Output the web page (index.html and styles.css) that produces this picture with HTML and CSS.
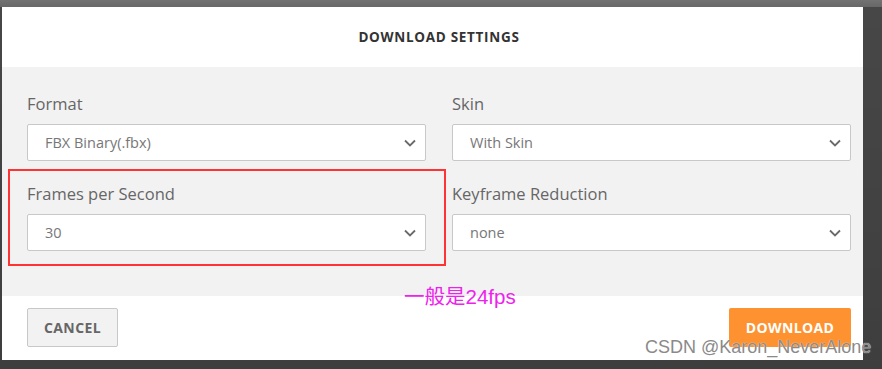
FILE: index.html
```html
<!DOCTYPE html>
<html lang="en">
<head>
    <meta charset="UTF-8">
    <title>Download Settings</title>
    <link rel="stylesheet" href="styles.css">
</head>
<body>
    <div class="dialog">
        <div class="dialog-header">
            <h2>Download Settings</h2>
        </div>

        <div class="dialog-body">
            <div class="field">
                <label>Format</label>
                <div class="select">
                    <span>FBX Binary(.fbx)</span>
                    <svg class="chevron" viewBox="0 0 12 8"><path d="M1 1.5 6 6.5 11 1.5"/></svg>
                </div>
            </div>
            <div class="field">
                <label>Skin</label>
                <div class="select">
                    <span>With Skin</span>
                    <svg class="chevron" viewBox="0 0 12 8"><path d="M1 1.5 6 6.5 11 1.5"/></svg>
                </div>
            </div>
            <div class="field">
                <label>Frames per Second</label>
                <div class="select">
                    <span>30</span>
                    <svg class="chevron" viewBox="0 0 12 8"><path d="M1 1.5 6 6.5 11 1.5"/></svg>
                </div>
            </div>
            <div class="field">
                <label>Keyframe Reduction</label>
                <div class="select">
                    <span>none</span>
                    <svg class="chevron" viewBox="0 0 12 8"><path d="M1 1.5 6 6.5 11 1.5"/></svg>
                </div>
            </div>
            <div class="highlight"></div>
        </div>

        <div class="dialog-footer">
            <button class="btn btn-cancel">Cancel</button>
            <button class="btn btn-download">Download</button>
        </div>

        <div class="note">一般是24fps</div>
    </div>
    <div class="watermark">CSDN @Karon_NeverAlone</div>
</body>
</html>
```

FILE: styles.css
```css
:root {
    --orange: #ff9230;
    --panel-gray: #f2f2f2;
    --text-gray: #666;
    --border-color: #c8c8c8;
}

body {
    margin: 0;
    height: 369px;
    overflow: hidden;
    position: relative;
    font-family: 'Open Sans', 'Noto Sans', sans-serif;
    background: linear-gradient(to bottom, #727272 0, #686868 7px, #474747 7px, #3e3e3e 100%);
}

.dialog {
    position: relative;
    width: 861px;
    margin: 7px 0 0 2px;
    background-color: white;
}

.dialog-header {
    height: 60px;
    display: flex;
    align-items: center;
    justify-content: center;
    padding: 0 12px 0 25px;
}

.dialog-header h2 {
    margin: 0;
    font-size: 13.5px;
    font-weight: 700;
    letter-spacing: 0.7px;
    text-transform: uppercase;
    color: #333;
}

.dialog-body {
    position: relative;
    background-color: var(--panel-gray);
    padding: 26px 12px 45px 25px;
    display: grid;
    grid-template-columns: 399px 399px;
    column-gap: 26px;
    row-gap: 22px;
}

.field label {
    display: block;
    font-size: 16.5px;
    line-height: 21px;
    color: var(--text-gray);
    margin-bottom: 10px;
}

.select {
    box-sizing: border-box;
    height: 37px;
    border: 1px solid var(--border-color);
    border-radius: 2px;
    background-color: white;
    display: flex;
    align-items: center;
    justify-content: space-between;
    padding: 0 9px 0 17px;
    font-size: 14.5px;
    color: #777;
}

.chevron {
    width: 12px;
    height: 8px;
    fill: none;
    stroke: #6a6a6a;
    stroke-width: 1.8;
}

.highlight {
    position: absolute;
    left: 6px;
    top: 102px;
    width: 434px;
    height: 93px;
    border: 2px solid #f33;
}

.dialog-footer {
    height: 64px;
    box-sizing: border-box;
    padding: 12px 12px 0 25px;
    display: flex;
    justify-content: space-between;
    align-items: flex-start;
}

.btn {
    height: 39px;
    border-radius: 2px;
    font-family: 'Open Sans', sans-serif;
    font-size: 14px;
    font-weight: 700;
    letter-spacing: 0.4px;
    text-transform: uppercase;
    cursor: pointer;
}

.btn-cancel {
    width: 91px;
    background-color: var(--panel-gray);
    border: 1px solid var(--border-color);
    color: var(--text-gray);
}

.btn-download {
    width: 122px;
    background-color: var(--orange);
    border: none;
    color: white;
}

.note {
    position: absolute;
    left: 402px;
    top: 273px;
    font-family: 'Liberation Sans', 'Noto Sans CJK SC', sans-serif;
    font-size: 20.5px;
    color: #ee22ee;
}

.watermark {
    position: absolute;
    left: 645px;
    top: 337px;
    font-family: 'Liberation Sans', sans-serif;
    font-size: 18px;
    color: #8a8a8a;
    text-shadow: 0 0 1px white;
}
```
